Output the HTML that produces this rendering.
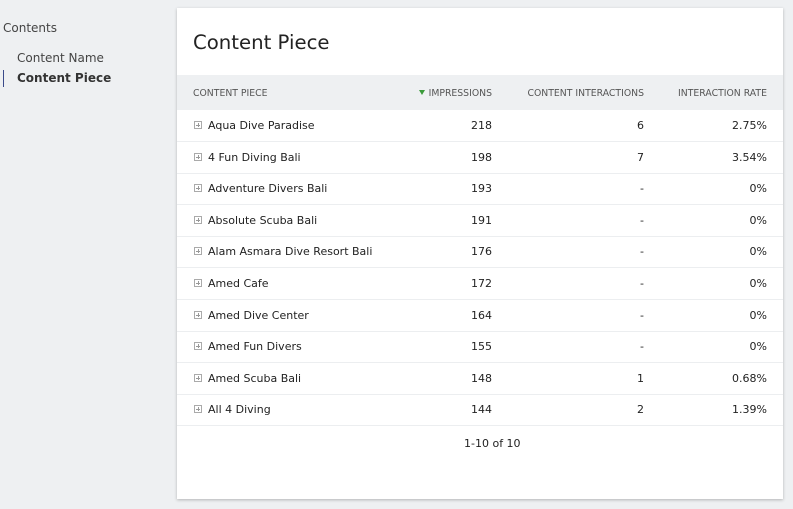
<!DOCTYPE html>
<html><head><style>
body{margin:0;width:793px;height:509px;background:#eef0f2;font-family:"DejaVu Sans","Liberation Sans",sans-serif;color:#222;position:relative;overflow:hidden}
.side1{position:absolute;left:3px;top:21px;font-size:12px;color:#444}
.n1{position:absolute;left:17px;top:51px;font-size:12px;color:#444}
.n2{position:absolute;left:17px;top:71px;font-size:12px;font-weight:bold;color:#333}
.bar{position:absolute;left:3px;top:70px;width:1px;height:17px;background:#3a4a8a}
.card{position:absolute;left:177px;top:8px;width:606px;height:491px;background:#fff;box-shadow:0 1px 3px rgba(0,0,0,.25)}
h1{position:absolute;left:16px;top:23px;margin:0;font-size:19.7px;font-weight:normal;color:#222}
.hdr{position:absolute;left:0;top:67px;width:606px;height:35px;background:#eef0f2;font-size:9.3px;color:#555}
.hdr span,.row span{position:absolute;top:13px}
.row{position:absolute;left:0;width:606px;height:31px;border-bottom:1px solid #eceef0;font-size:11px}
.row span{top:9px}
.pl{position:absolute;left:17px;top:11px;width:6px;height:6px;border:1px solid #aaa;font-size:0}
.pl:before{content:"";position:absolute;left:1px;top:2.5px;width:4px;height:1px;background:#999}
.pl:after{content:"";position:absolute;left:2.5px;top:1px;width:1px;height:4px;background:#999}
.r1{right:291px}.r2{right:139px}.r3{right:16px}
.foot{position:absolute;top:429px;left:287px;font-size:11px}
.tri{display:inline-block;width:0;height:0;border-left:3.5px solid transparent;border-right:3.5px solid transparent;border-top:5px solid #3a9a3a;margin-right:4px;vertical-align:1px}
</style></head><body>
<div class="side1">Contents</div>
<div class="n1">Content Name</div>
<div class="bar"></div>
<div class="n2">Content Piece</div>
<div class="card">
<h1>Content Piece</h1>
<div class="hdr"><span style="left:16px">CONTENT PIECE</span><span class="r1"><i class="tri"></i>IMPRESSIONS</span><span class="r2">CONTENT INTERACTIONS</span><span class="r3">INTERACTION RATE</span></div>
<div class="row" style="top:102px"><i class="pl"></i><span style="left:31px">Aqua Dive Paradise</span><span class="r1">218</span><span class="r2">6</span><span class="r3">2.75%</span></div>
<div class="row" style="top:134px"><i class="pl"></i><span style="left:31px">4 Fun Diving Bali</span><span class="r1">198</span><span class="r2">7</span><span class="r3">3.54%</span></div>
<div class="row" style="top:165px"><i class="pl"></i><span style="left:31px">Adventure Divers Bali</span><span class="r1">193</span><span class="r2">-</span><span class="r3">0%</span></div>
<div class="row" style="top:197px"><i class="pl"></i><span style="left:31px">Absolute Scuba Bali</span><span class="r1">191</span><span class="r2">-</span><span class="r3">0%</span></div>
<div class="row" style="top:228px"><i class="pl"></i><span style="left:31px">Alam Asmara Dive Resort Bali</span><span class="r1">176</span><span class="r2">-</span><span class="r3">0%</span></div>
<div class="row" style="top:260px"><i class="pl"></i><span style="left:31px">Amed Cafe</span><span class="r1">172</span><span class="r2">-</span><span class="r3">0%</span></div>
<div class="row" style="top:292px"><i class="pl"></i><span style="left:31px">Amed Dive Center</span><span class="r1">164</span><span class="r2">-</span><span class="r3">0%</span></div>
<div class="row" style="top:323px"><i class="pl"></i><span style="left:31px">Amed Fun Divers</span><span class="r1">155</span><span class="r2">-</span><span class="r3">0%</span></div>
<div class="row" style="top:355px"><i class="pl"></i><span style="left:31px">Amed Scuba Bali</span><span class="r1">148</span><span class="r2">1</span><span class="r3">0.68%</span></div>
<div class="row" style="top:386px"><i class="pl"></i><span style="left:31px">All 4 Diving</span><span class="r1">144</span><span class="r2">2</span><span class="r3">1.39%</span></div>
<div class="foot">1-10 of 10</div>
</div>
</body></html>
